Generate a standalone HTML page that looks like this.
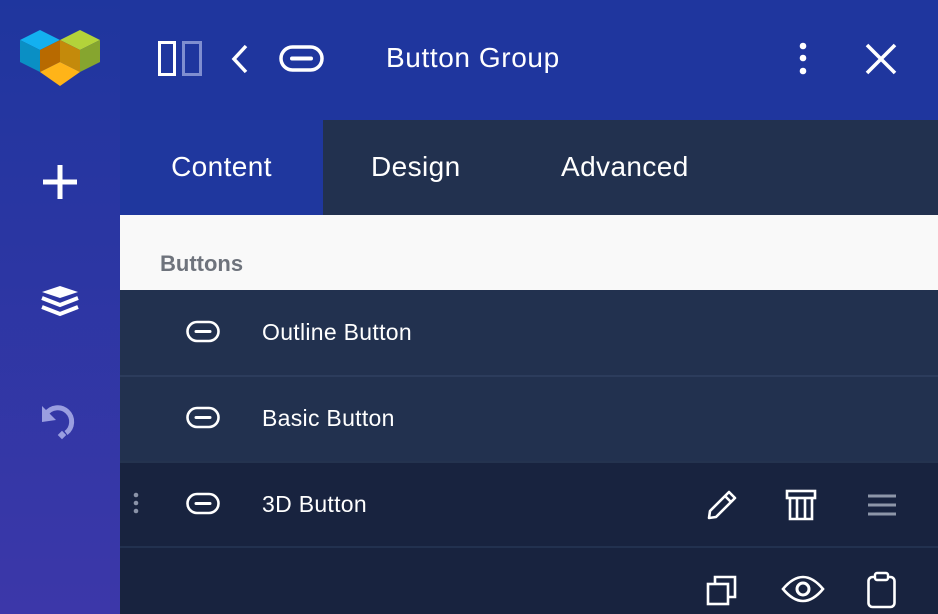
<!DOCTYPE html>
<html><head><style>
*{margin:0;padding:0;box-sizing:border-box}
body{width:938px;height:614px;overflow:hidden;font-family:"Liberation Sans",sans-serif;background:#18233f;position:relative}
.a{position:absolute}
.side{left:0;top:0;width:120px;height:614px;background:linear-gradient(#1f369e,#3c37a9)}
.head{left:120px;top:0;width:818px;height:120px;background:#1f369e}
.tabs{left:120px;top:120px;width:818px;height:95px;background:#22314f}
.tab{position:absolute;top:120px;height:95px;line-height:93px;color:#fff;font-size:28px;letter-spacing:0.4px}
.white{left:120px;top:215px;width:818px;height:75px;background:#f9f9f9}
.row{left:120px;width:818px;color:#fff;font-size:23px;letter-spacing:0.3px}
.row span{position:absolute;left:142px}
</style></head><body>
<div class="a side"></div>
<div class="a head"></div>
<svg class="a" style="left:20px;top:28px" width="82" height="60" viewBox="0 0 82 60">
<polygon points="0,12 20,2 40,12 20,22" fill="#13b0f0"/>
<polygon points="0,12 20,22 20,44 0,34" fill="#0a8fc4"/>
<polygon points="20,22 40,12 40,34 20,44" fill="#b86a00"/>
<polygon points="40,12 60,2 80,12 60,22" fill="#b3d33a"/>
<polygon points="40,12 60,22 60,44 40,34" fill="#c48a0b"/>
<polygon points="60,22 80,12 80,34 60,44" fill="#86a52f"/>
<polygon points="20,44 40,34 60,44 40,58" fill="#ffb418"/>
</svg>
<div class="a" style="left:158px;top:41px;width:18px;height:35px;border:3px solid #fff"></div>
<div class="a" style="left:182px;top:41px;width:20px;height:35px;border:3px solid #7f8ed0"></div>
<svg class="a" style="left:228px;top:43px" width="24" height="32"><path d="M18 3 L6 16 L18 29" stroke="#fff" stroke-width="3.5" fill="none"/></svg>
<svg class="a" style="left:279px;top:44px" width="46" height="30"><rect x="2" y="3" width="41" height="23" rx="11.5" stroke="#fff" stroke-width="3.5" fill="none"/><line x1="13" y1="14.5" x2="32" y2="14.5" stroke="#fff" stroke-width="4" stroke-linecap="round"/></svg>
<div class="a" style="left:386px;top:42px;color:#fff;font-size:28px;letter-spacing:0.6px">Button Group</div>
<svg class="a" style="left:795px;top:40px" width="16" height="36"><circle cx="8" cy="6" r="3.3" fill="#fff"/><circle cx="8" cy="18" r="3.3" fill="#fff"/><circle cx="8" cy="31" r="3.3" fill="#fff"/></svg>
<svg class="a" style="left:864px;top:42px" width="34" height="34"><path d="M3 3L31 31M31 3L3 31" stroke="#fff" stroke-width="3.6"/></svg>
<svg class="a" style="left:40px;top:162px" width="40" height="40"><path d="M20 3V37M3 20H37" stroke="#fff" stroke-width="5"/></svg>
<svg class="a" style="left:40px;top:284px" width="40" height="34"><polygon points="20,2 38,8 20,14 2,8" fill="#fff"/><polyline points="2,14 20,21 38,14" stroke="#fff" stroke-width="4" fill="none"/><polyline points="2,23 20,30 38,23" stroke="#fff" stroke-width="4" fill="none"/></svg>
<svg class="a" style="left:40px;top:400px" width="40" height="40"><path d="M6 14 A14 14 0 1 1 26 33" stroke="#9a9ee0" stroke-width="5" fill="none"/><polygon points="2,6 2,22 16,20" fill="#9a9ee0"/><rect x="19" y="32" width="6" height="6" transform="rotate(45 22 35)" fill="#9a9ee0"/></svg>
<div class="a tabs"></div>
<div class="tab" style="left:120px;width:203px;background:#1f379e;text-align:center">Content</div>
<div class="tab" style="left:371px">Design</div>
<div class="tab" style="left:561px">Advanced</div>
<div class="a white"></div>
<div class="a" style="left:160px;top:251px;color:#6e737c;font-size:22px;font-weight:bold">Buttons</div>
<div class="a row" style="top:290px;height:85px;background:#22314f;line-height:84px"><span>Outline Button</span></div>
<div class="a row" style="top:375px;height:2px;background:#2c3c5c"></div>
<div class="a row" style="top:377px;height:84px;background:#22314f;line-height:82px"><span>Basic Button</span></div>
<div class="a row" style="top:461px;height:2px;background:#24334f"></div>
<div class="a row" style="top:463px;height:84px;background:#18233f;line-height:82px"><span>3D Button</span></div>
<div class="a row" style="top:546px;height:2px;background:#22314f"></div>
<svg class="a" style="left:186px;top:320px" width="34" height="24"><rect x="1.5" y="2" width="31" height="19" rx="9.5" stroke="#fff" stroke-width="2.6" fill="none"/><line x1="10" y1="11.5" x2="24" y2="11.5" stroke="#fff" stroke-width="3" stroke-linecap="round"/></svg>
<svg class="a" style="left:186px;top:406px" width="34" height="24"><rect x="1.5" y="2" width="31" height="19" rx="9.5" stroke="#fff" stroke-width="2.6" fill="none"/><line x1="10" y1="11.5" x2="24" y2="11.5" stroke="#fff" stroke-width="3" stroke-linecap="round"/></svg>
<svg class="a" style="left:186px;top:492px" width="34" height="24"><rect x="1.5" y="2" width="31" height="19" rx="9.5" stroke="#fff" stroke-width="2.6" fill="none"/><line x1="10" y1="11.5" x2="24" y2="11.5" stroke="#fff" stroke-width="3" stroke-linecap="round"/></svg>
<svg class="a" style="left:131px;top:491px" width="10" height="26"><circle cx="5" cy="4" r="2.3" fill="#8a93a8"/><circle cx="5" cy="12" r="2.3" fill="#8a93a8"/><circle cx="5" cy="20" r="2.3" fill="#8a93a8"/></svg>
<svg class="a" style="left:705px;top:488px" width="34" height="34"><path d="M4 30 L5 23 L24 4 L30 10 L11 29 Z M20 8 L26 14" stroke="#fff" stroke-width="2.6" fill="none" stroke-linejoin="round"/></svg>
<svg class="a" style="left:785px;top:489px" width="34" height="34"><rect x="2" y="2" width="28" height="7" stroke="#fff" stroke-width="2.6" fill="none"/><path d="M5 9V30H27V9M12 10V29M20 10V29" stroke="#fff" stroke-width="2.6" fill="none"/></svg>
<svg class="a" style="left:866px;top:492px" width="32" height="26"><path d="M2 4H30M2 13H30M2 22H30" stroke="#8d96a8" stroke-width="3"/></svg>
<svg class="a" style="left:705px;top:573px" width="34" height="34"><rect x="3" y="11" width="20" height="20" stroke="#fff" stroke-width="2.6" fill="none"/><path d="M10 10V4H30V24H24" stroke="#fff" stroke-width="2.6" fill="none"/></svg>
<svg class="a" style="left:781px;top:571px" width="44" height="36"><path d="M2 18 Q22 -6 42 18 Q22 42 2 18 Z" stroke="#fff" stroke-width="2.6" fill="none"/><circle cx="22" cy="18" r="6" stroke="#fff" stroke-width="3" fill="none"/></svg>
<svg class="a" style="left:866px;top:571px" width="32" height="38"><rect x="2.5" y="6" width="26" height="30" rx="4" stroke="#fff" stroke-width="2.6" fill="none"/><rect x="9" y="2" width="13" height="7" rx="2" stroke="#fff" stroke-width="2.4" fill="#18233f"/></svg>
</body></html>
